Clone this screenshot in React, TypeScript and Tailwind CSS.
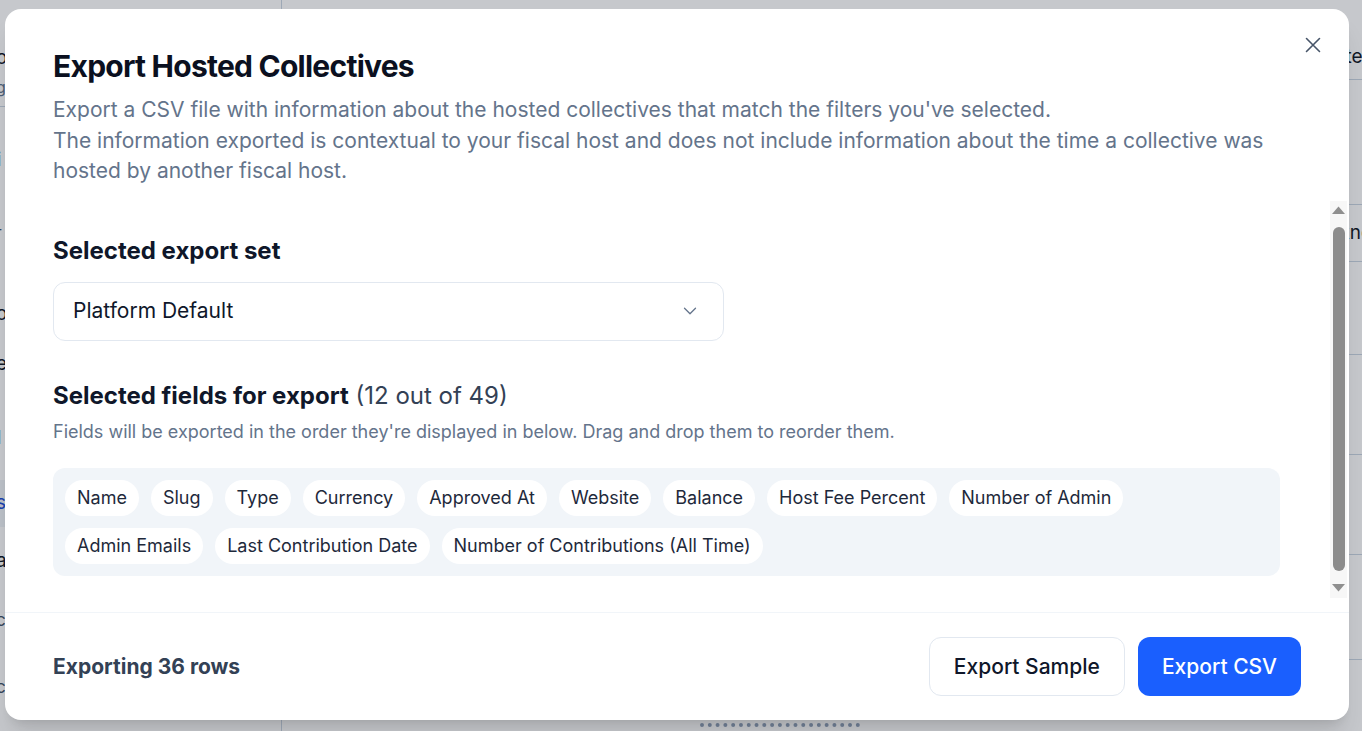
import { ChevronDown } from "lucide-react";

const ROW_ONE = ["Name", "Slug", "Type", "Currency", "Approved At", "Website", "Balance", "Host Fee Percent", "Number of Admin"];
const ROW_TWO = ["Admin Emails", "Last Contribution Date", "Number of Contributions (All Time)"];

function Chip({ label }: { label: string }) {
  return (
    <span className="h-9 px-3 rounded-full bg-white flex items-center text-[18px] text-[#1e293b] whitespace-nowrap">
      {label}
    </span>
  );
}

function ScrollBar() {
  return (
    <div className="w-[17px] shrink-0 bg-[#f7f7f7] flex flex-col items-center pt-[3px]">
      <svg width="15" height="13" viewBox="0 0 15 13" className="shrink-0">
        <path d="M7.5 2.5 14 10H1Z" fill="#8f8f8f" />
      </svg>
      <div className="mt-[10px] w-[12px] h-[344px] rounded-full bg-[#8c8c8c]" />
      <svg width="15" height="13" viewBox="0 0 15 13" className="mt-[10px] shrink-0">
        <path d="M1 3H14L7.5 10.5Z" fill="#8f8f8f" />
      </svg>
    </div>
  );
}

function Backdrop() {
  const side = [
    { h: "h-[75px]", t: "o", c: "text-[19px] text-[#111827] pt-[48px]" },
    { h: "h-[32px]", t: "g", c: "text-[16px] text-slate-500 pt-[4px] border-b border-slate-300" },
    { h: "h-[70px]", t: "i", c: "text-[19px] font-bold text-[#1e2a4a] pt-[43px]" },
    { h: "h-[72px]", t: "r", c: "text-[15px] text-slate-600 pt-[48px]" },
    { h: "h-[75px]", t: "o", c: "text-[19px] text-[#111827] pt-[55px]" },
    { h: "h-[70px]", t: "e", c: "text-[19px] text-[#111827] pt-[30px]" },
    { h: "h-[86px]", t: "l", c: "text-[19px] font-bold text-[#1e2a4a] pt-[34px]" },
    { h: "h-[47px]", t: "s", c: "text-[19px] text-[#1d4ed8] bg-slate-100 pt-[13px]" },
    { h: "h-[70px]", t: "a", c: "text-[19px] text-[#111827] pt-[24px]" },
    { h: "h-[65px]", t: "c", c: "text-[17px] text-slate-600 pt-[15px]" },
    { h: "h-[69px]", t: "c", c: "text-[17px] text-slate-600 pt-[17px]" },
  ];
  const rows = [
    { h: "h-[80px]", t: "Date", c: "grid-cols-[1039px_1fr] items-end pb-[8px]" },
    { h: "h-[125px]", t: "", c: "grid-cols-[1039px_1fr]" },
    { h: "h-[57px]", t: "Unknown", c: "grid-cols-[1032px_1fr] items-center" },
    { h: "h-[93px]", t: "", c: "grid-cols-[1039px_1fr]" },
    { h: "h-[100px]", t: "", c: "grid-cols-[1039px_1fr]" },
    { h: "h-[100px]", t: "", c: "grid-cols-[1039px_1fr]" },
    { h: "h-[105px]", t: "", c: "grid-cols-[1039px_1fr]" },
  ];
  return (
    <div className="flex h-[731px] w-[1362px] overflow-hidden bg-white">
      <div className="w-[282px] shrink-0 border-r border-slate-300 flex flex-col">
        {side.map((s, i) => (
          <div key={i} className={`${s.h} ${s.c} shrink-0 pl-0 leading-none`}>
            <span className="-ml-[4px] inline-block">{s.t}</span>
          </div>
        ))}
      </div>
      <div className="flex-1 flex flex-col">
        {rows.map((r, i) => (
          <div key={i} className={`${r.h} border-b border-slate-300 grid ${r.c}`}>
            <div />
            <div className="text-[19px] text-[#111827] whitespace-nowrap flex items-end">{r.t}</div>
          </div>
        ))}
        <div className="flex-1 flex items-end pb-[4px]">
          <div className="ml-[418px] h-[4px] w-[160px] border-t-4 border-dotted border-slate-400" />
        </div>
      </div>
    </div>
  );
}

export default function App() {
  return (
    <div className="relative w-[1362px] h-[731px] overflow-hidden" style={{ fontFamily: "Inter, 'Noto Sans', sans-serif" }}>
      <Backdrop />
      <div className="absolute inset-0 bg-[rgba(15,23,42,0.24)]" />

      <div className="absolute left-[5px] top-[9px] w-[1344px] h-[711px] bg-white rounded-2xl shadow-xl flex flex-col overflow-hidden">
        <button className="absolute right-[28px] top-[28px] w-[16px] h-[16px] text-[#475569]">
          <svg width="16" height="16" viewBox="0 0 16 16" fill="none" stroke="currentColor" strokeWidth="1.6" strokeLinecap="round">
            <path d="M1.5 1.5 14.5 14.5M14.5 1.5 1.5 14.5" />
          </svg>
        </button>

        <div className="px-12 pt-[40px] pb-[14px]">
          <h1 className="text-[30px] leading-[34px] font-bold tracking-tight text-[#0b1020]">Export Hosted Collectives</h1>
          <p className="mt-[12px] text-[21px] leading-[30.5px] text-[#64748b]">
            Export a CSV file with information about the hosted collectives that match the filters you've selected.
            <br />
            The information exported is contextual to your fiscal host and does not include information about the time a collective was hosted by another fiscal host.
          </p>
        </div>

        <div className="h-[397px] shrink-0 overflow-hidden mr-[2px] flex">
          <div className="flex-1 pl-12 pr-[50px] pt-[36px]">
            <h2 className="text-[24px] leading-[28px] font-bold text-[#0f172a]">Selected export set</h2>
            <div className="mt-[17px] w-[671px] h-[59px] rounded-xl border border-slate-200 pl-[19px] pr-[22px] flex items-center justify-between">
              <span className="text-[21px] text-[#0f172a]">Platform Default</span>
              <ChevronDown size={22} strokeWidth={1.4} className="text-[#64748b]" />
            </div>

            <h2 className="mt-[41px] text-[24px] leading-[28px] text-[#0f172a]">
              <span className="font-bold">Selected fields for export</span>{" "}
              <span className="text-[#334155]">(12 out of 49)</span>
            </h2>
            <p className="mt-[10px] text-[18px] leading-[24px] text-[#64748b]">
              Fields will be exported in the order they're displayed in below. Drag and drop them to reorder them.
            </p>

            <div className="mt-[24px] rounded-xl bg-[#f1f5f9] p-3 flex flex-col gap-3">
              <div className="flex gap-3">
                {ROW_ONE.map((f) => (
                  <Chip key={f} label={f} />
                ))}
              </div>
              <div className="flex gap-3">
                {ROW_TWO.map((f) => (
                  <Chip key={f} label={f} />
                ))}
              </div>
            </div>
          </div>
          <ScrollBar />
        </div>

        <div className="mt-[14px] border-t border-slate-100 h-[109px] px-12 flex items-center justify-between">
          <span className="text-[21px] font-bold text-[#334155]">Exporting 36 rows</span>
          <div className="flex gap-[13px]">
            <button className="h-[59px] px-6 rounded-xl border border-slate-200 bg-white text-[21px] font-medium text-[#0f172a]">
              Export Sample
            </button>
            <button className="h-[59px] px-6 rounded-xl bg-[#1a5ffe] text-[21px] font-medium text-white">
              Export CSV
            </button>
          </div>
        </div>
      </div>
    </div>
  );
}
